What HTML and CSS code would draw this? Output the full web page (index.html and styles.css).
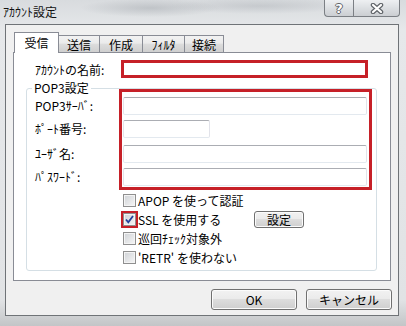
FILE: index.html
```html
<!DOCTYPE html>
<html lang="ja">
<head>
    <meta charset="UTF-8">
    <title>ｱｶｳﾝﾄ設定</title>
    <link rel="stylesheet" href="styles.css">
</head>
<body>
<div class="window">
    <div class="titlebar">
        <span class="title">ｱｶｳﾝﾄ設定</span>
        <div class="caption">
            <span class="cap-btn help">?</span>
            <span class="cap-btn close">
                <svg width="14" height="11" viewBox="0 0 14 11">
                    <path d="M3 2 L11 9 M11 2 L3 9" stroke="#5f6368" stroke-width="4.5" stroke-linecap="round"/>
                    <path d="M3 2 L11 9 M11 2 L3 9" stroke="#fff" stroke-width="2.2" stroke-linecap="round"/>
                </svg>
            </span>
        </div>
    </div>
    <div class="client">
        <ul class="tabs">
            <li class="selected">受信</li>
            <li class="t2">送信</li>
            <li class="t3">作成</li>
            <li class="t4">ﾌｨﾙﾀ</li>
            <li class="t5">接続</li>
        </ul>
        <div class="panel">
            <div class="name-row">
                <span class="name-label">ｱｶｳﾝﾄの名前:</span>
                <div class="mark name-box"></div>
            </div>
            <div class="group">
                <div class="legend">POP3設定</div>
                <div class="server">
                    <div class="labels">
                        <div class="lbl">POP3ｻｰﾊﾞ:</div>
                        <div class="lbl">ﾎﾟｰﾄ番号:</div>
                        <div class="lbl">ﾕｰｻﾞ名:</div>
                        <div class="lbl">ﾊﾟｽﾜｰﾄﾞ:</div>
                    </div>
                    <div class="mark fields">
                        <div class="field"></div>
                        <div class="field short"></div>
                        <div class="field"></div>
                        <div class="field"></div>
                    </div>
                </div>
                <div class="options">
                    <div class="opt"><span class="chk"></span><span>APOP を使って認証</span></div>
                    <div class="opt">
                        <span class="chk-mark"><span class="chk">
                            <svg width="11" height="11" viewBox="0 0 11 11">
                                <path d="M2 5.5 L4.3 8.3 L9 2" fill="none" stroke="#23409a" stroke-width="1.8"/>
                            </svg>
                        </span></span>
                        <span class="wide">SSL を使用する</span>
                        <span class="btn small">設定</span>
                    </div>
                    <div class="opt"><span class="chk"></span><span>巡回ﾁｪｯｸ対象外</span></div>
                    <div class="opt"><span class="chk"></span><span>'RETR' を使わない</span></div>
                </div>
            </div>
        </div>
        <div class="buttons">
            <span class="btn">OK</span>
            <span class="btn">キャンセル</span>
        </div>
    </div>
</div>
</body>
</html>
```

FILE: styles.css
```css
*{
    margin: 0;
    padding: 0;
    box-sizing: border-box;
}
li{
    list-style: none;
}
body{
    width: 406px;
    height: 326px;
    overflow: hidden;
    font: 12px "Noto Sans CJK JP", "Noto Sans", sans-serif;
    color: #000;
}
.window{
    width: 406px;
    height: 326px;
    background:
        radial-gradient(ellipse 70px 9px at 150px 8px, rgba(140,146,152,.35), transparent),
        radial-gradient(ellipse 90px 8px at 260px 6px, rgba(150,156,162,.3), transparent),
        linear-gradient(#d8dbde, #e6e8ea 30px, #e1e3e5 300px, #c3c5c7);
}
.titlebar{
    height: 24px;
    display: flex;
    align-items: flex-start;
}
.title{
    padding-left: 3px;
    line-height: 24px;
    color: #111;
}
.caption{
    margin-left: auto;
    margin-right: 6px;
    display: flex;
}
.cap-btn{
    height: 17px;
    border: 1px solid #7b7f84;
    border-top: none;
    background: linear-gradient(#eef0f2, #dcdfe2 50%, #cbced2);
    display: flex;
    align-items: center;
    justify-content: center;
}
.help{
    width: 29px;
    border-right: none;
    border-radius: 0 0 0 4px;
    font: bold 13px "DejaVu Sans", sans-serif;
    color: #fff;
    text-shadow: 1px 0 #5f6368, -1px 0 #5f6368, 0 1px #5f6368, 0 -1px #5f6368;
}
.close{
    width: 47px;
    border-radius: 0 0 4px 0;
}

.client{
    margin-left: 5px;
    width: 394px;
    height: 292px;
    border: 1px solid #6f7377;
    background: #f0f0f0;
    padding: 7px 0 0 7px;
}
.tabs{
    display: flex;
    align-items: flex-end;
    height: 21px;
    margin-bottom: -1px;
    padding-left: 1px;
}
.tabs li{
    height: 17px;
    margin-bottom: 1px;
    margin-left: -1px;
    border: 1px solid #898c95;
    border-bottom: none;
    background: linear-gradient(#f2f2f2, #ebebeb 45%, #dddddd 50%, #cfcfcf);
    text-align: center;
    line-height: 17px;
}
.tabs .selected{
    width: 45px;
    height: 21px;
    margin: 0;
    background: #fff;
    line-height: 19px;
    position: relative;
    z-index: 1;
}
.tabs .t2{ width: 42px; }
.tabs .t3{ width: 44px; }
.tabs .t4{ width: 43px; }
.tabs .t5{ width: 40px; }

.panel{
    width: 378px;
    height: 229px;
    border: 1px solid #898c95;
    background: #fff;
    padding: 7px 0 0 12px;
}
.mark{
    border: 3px solid #c62028;
}
.name-row{
    display: flex;
    align-items: center;
    height: 18px;
}
.name-label{
    width: 95px;
    padding-left: 9px;
}
.name-box{
    width: 247px;
    height: 18px;
}
.group{
    margin-top: 10px;
    width: 351px;
    border: 1px solid #d5dfe5;
    border-radius: 3px;
    padding-bottom: 3px;
}
.legend{
    width: fit-content;
    margin: -9px 0 0 5px;
    padding: 0 2px;
    line-height: 16px;
    background: #fff;
}
.server{
    display: flex;
    margin-top: -7px;
    padding-left: 8px;
}
.labels{
    width: 84px;
    padding-top: 8px;
}
.lbl{
    height: 18px;
    line-height: 18px;
}
.lbl + .lbl, .field + .field{
    margin-top: 5px;
}
.lbl:nth-child(3), .field:nth-child(3){
    margin-top: 7px;
}
.fields{
    width: 253px;
    padding: 5px 2px 1px 1px;
}
.field{
    height: 18px;
    background: #fff;
    border: 1px solid;
    border-color: #abadb3 #e2e3ea #e3e9ef #e2e3ea;
    border-radius: 2px;
}
.field.short{
    width: 87px;
}
.options{
    margin-top: 1px;
    padding-left: 96px;
}
.opt{
    display: flex;
    align-items: center;
    height: 19px;
}
.chk{
    width: 13px;
    height: 13px;
    margin-right: 2px;
    border: 1px solid #8f8f8f;
    background: linear-gradient(135deg, #cfd2d6, #f6f6f6);
    box-shadow: inset 0 0 0 1px #f4f4f4;
    display: flex;
}
.chk-mark{
    display: flex;
    margin-left: -2px;
    border: 2px solid #c62028;
}
.chk-mark .chk{
    margin-right: 0;
}
.wide{
    width: 116px;
}
.btn{
    display: flex;
    align-items: center;
    justify-content: center;
    width: 86px;
    height: 21px;
    border: 1px solid #707070;
    border-radius: 3px;
    background: linear-gradient(#f2f2f2, #ebebeb 45%, #dddddd 50%, #cfcfcf);
    box-shadow: inset 0 0 0 1px #fbfbfb;
}
.btn.small{
    width: 50px;
    height: 17px;
}
.buttons{
    display: flex;
    justify-content: flex-end;
    gap: 9px;
    width: 379px;
    margin-top: 8px;
}
```
